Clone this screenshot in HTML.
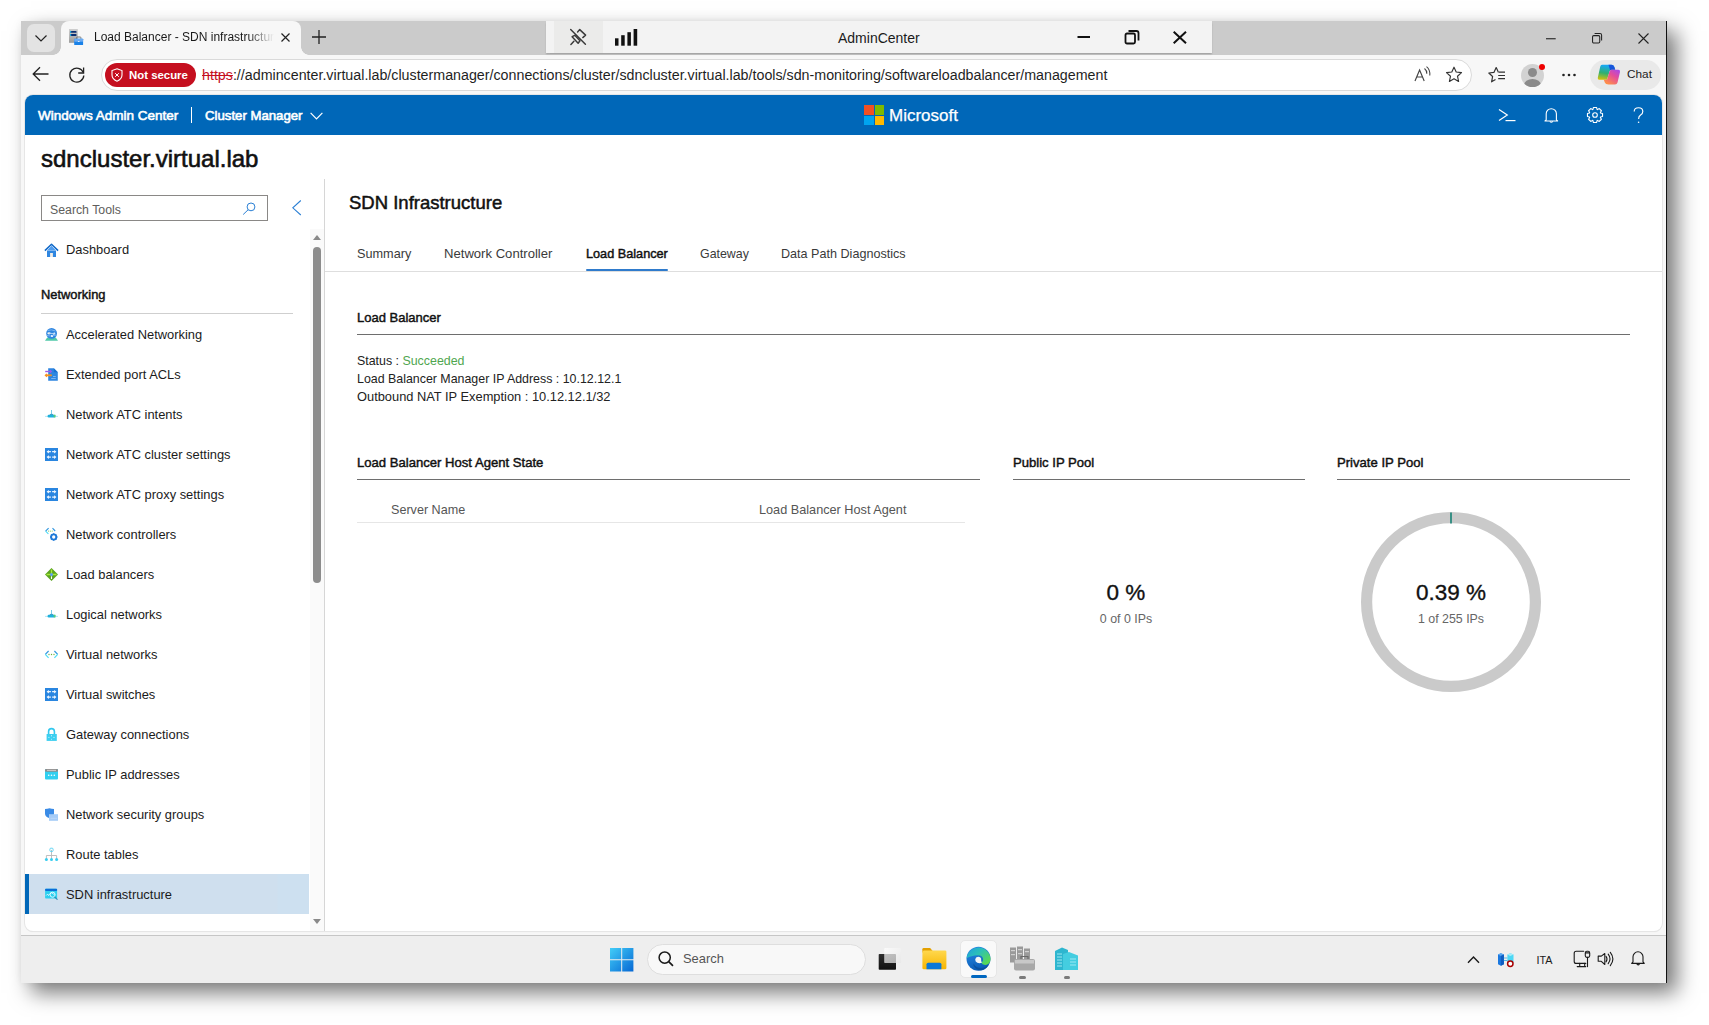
<!DOCTYPE html>
<html><head><meta charset="utf-8">
<style>
*{box-sizing:border-box;margin:0;padding:0}
html,body{width:1709px;height:1025px;overflow:hidden;background:#fff;font-family:"Liberation Sans",sans-serif;color:#1b1b1b}
.a{position:absolute}
.t{position:absolute;white-space:nowrap;line-height:1}
svg{position:absolute;overflow:visible}
#win{position:absolute;left:21px;top:21px;width:1646px;height:962px;background:#f7f7f7;box-shadow:10px 10px 20px rgba(0,0,0,.52), 0 0 8px rgba(0,0,0,.045);border-right:1px solid #111}
#tabstrip{position:absolute;left:21px;top:21px;width:1645px;height:34px;background:#cbcbcb}
#content{position:absolute;left:25px;top:95px;width:1637px;height:836px;background:#fff;border-radius:8px;overflow:hidden;box-shadow:0 0 0 1px #e6e6e6, 0 1px 1px rgba(0,0,0,.1)}
#taskbar{position:absolute;left:21px;top:935px;width:1645px;height:48px;background:#eeeeee;border-top:1px solid #c6c6c6}
.si{position:absolute;left:66px;font-size:12.9px;line-height:1;white-space:nowrap;color:#1b1b1b}
</style></head><body>
<div id="win"></div>
<div id="tabstrip"></div>
<!-- TABSTRIP -->
<div id="tabs">
  <div class="a" style="left:61px;top:21px;width:240px;height:34px;background:#f7f7f7;border-radius:8px 8px 0 0"></div>
  <div class="a" style="left:53px;top:47px;width:8px;height:8px;background:radial-gradient(circle at 0 0,#cbcbcb 7.5px,#f7f7f7 8px)"></div>
  <div class="a" style="left:301px;top:47px;width:8px;height:8px;background:radial-gradient(circle at 100% 0,#cbcbcb 7.5px,#f7f7f7 8px)"></div>
  <div class="a" style="left:27px;top:24px;width:28px;height:28px;background:#e3e3e3;border-radius:7px"></div>
  <svg style="left:35px;top:35px" width="12" height="7" viewBox="0 0 12 7"><path d="M0.5 0.5 L6 6 L11.5 0.5" fill="none" stroke="#222" stroke-width="1.2"/></svg>
  <svg style="left:68px;top:28px" width="17" height="18" viewBox="0 0 17 18">
    <defs><linearGradient id="fvg" x1="0" y1="0" x2="0" y2="1"><stop offset="0" stop-color="#cfcfcf"/><stop offset="1" stop-color="#9c9c9c"/></linearGradient></defs>
    <rect x="1" y="1" width="8.8" height="13.8" fill="url(#fvg)"/>
    <rect x="2" y="2.9" width="6.6" height="1.9" rx="0.9" fill="#0c2f72"/><rect x="2" y="2.9" width="1.2" height="1.9" fill="#2ab0e0"/>
    <rect x="2" y="6.1" width="6.6" height="1.9" rx="0.9" fill="#0c2f72"/><rect x="2" y="6.1" width="1.2" height="1.9" fill="#2ab0e0"/>
    <path d="M8.6 10.8 V9.6 Q8.6 9 9.3 9 H12.2 Q12.9 9 12.9 9.6 V10.8" fill="none" stroke="#6a6a6a" stroke-width="0.9"/>
    <rect x="6.2" y="10.7" width="8.9" height="6.3" rx="0.6" fill="#1a82e8"/>
    <rect x="6.2" y="10.7" width="8.9" height="3" rx="0.6" fill="#6aaaf2"/>
    <rect x="9.9" y="13.1" width="1.6" height="0.8" fill="#fff"/>
  </svg>
  <div class="t" style="left:94px;top:31px;font-size:12px;color:#1a1a1a;width:180px;overflow:hidden;-webkit-mask-image:linear-gradient(90deg,#000 85%,transparent 100%)">Load Balancer - SDN infrastructure</div>
  <svg style="left:281px;top:33px" width="9" height="9" viewBox="0 0 9 9"><path d="M0.5 0.5 L8.5 8.5 M8.5 0.5 L0.5 8.5" stroke="#222" stroke-width="1.2"/></svg>
  <svg style="left:312px;top:30px" width="14" height="14" viewBox="0 0 14 14"><path d="M7 0 V14 M0 7 H14" stroke="#222" stroke-width="1.3"/></svg>
  <!-- RDP bar -->
  <div class="a" style="left:546px;top:21px;width:666px;height:32px;background:#f3f3f3;box-shadow:0 1.5px 1.5px rgba(0,0,0,.18)"></div>
  <div class="a" style="left:554px;top:21px;width:49px;height:32px;background:#ebebea"></div>
  <svg style="left:569px;top:28px" width="18" height="18" viewBox="0 0 18 18"><g fill="none" stroke="#3a3a3a" stroke-width="1.45" stroke-linejoin="round" stroke-linecap="round"><path d="M1.7 1.6 L16.4 16.2"/><path d="M8.6 4 L10.75 1.6 L16.6 7.1 L13.8 9.6"/><path d="M3.1 8.7 L5.8 7.3 L11 12.7 L9.1 15.2 Z"/><path d="M4.9 13.2 L1.9 16.4"/></g></svg>
  <svg style="left:615px;top:29px" width="23" height="17" viewBox="0 0 23 17"><rect x="0" y="9.3" width="3.5" height="7.4" fill="#111"/><rect x="6.2" y="6.2" width="3.5" height="10.5" fill="#111"/><rect x="12.4" y="3.2" width="3.5" height="13.5" fill="#111"/><rect x="18.6" y="0" width="3.6" height="16.7" fill="#111"/></svg>
  <div class="t" style="left:838px;top:30.5px;font-size:14px;color:#1b1b1b">AdminCenter</div>
  <svg style="left:1077px;top:36px" width="14" height="3" viewBox="0 0 14 3"><rect x="0.5" y="0" width="12.5" height="2" fill="#111"/></svg>
  <svg style="left:1124px;top:29px" width="16" height="16" viewBox="0 0 16 16"><g fill="none" stroke="#111" stroke-width="1.8"><rect x="1.5" y="4.5" width="9.5" height="10" rx="1.5"/><path d="M4.5 2 H12.5 Q14.5 2 14.5 4 V11.5"/></g></svg>
  <svg style="left:1173px;top:31px" width="14" height="13" viewBox="0 0 14 13"><path d="M0.7 0.7 L13 12.3 M13 0.7 L0.7 12.3" stroke="#111" stroke-width="2"/></svg>
  <!-- window controls -->
  <svg style="left:1546px;top:37.6px" width="10" height="2" viewBox="0 0 10 2"><rect x="0" y="0.2" width="9.7" height="1.1" fill="#222"/></svg>
  <svg style="left:1592px;top:32.5px" width="11" height="11" viewBox="0 0 11 11"><g fill="none" stroke="#222" stroke-width="1.05"><rect x="0.55" y="2.6" width="7.2" height="7.4" rx="1.2"/><path d="M2.6 0.55 H8 Q9.6 0.55 9.6 2.2 V7.6"/></g></svg>
  <svg style="left:1637.5px;top:32.5px" width="11" height="11" viewBox="0 0 11 11"><path d="M0.5 0.5 L10.5 10.5 M10.5 0.5 L0.5 10.5" stroke="#222" stroke-width="1.1"/></svg>
</div>
<!-- TOOLBAR -->
<div id="toolbar">
  <svg style="left:32px;top:66px" width="17" height="16" viewBox="0 0 17 16"><path d="M16.5 8 H1.5 M8 1.2 L1.2 8 L8 14.8" fill="none" stroke="#222" stroke-width="1.3"/></svg>
  <svg style="left:68px;top:66px" width="18" height="18" viewBox="0 0 18 18"><path d="M15.3 6.5 A7 7 0 1 0 15.8 9.5" fill="none" stroke="#222" stroke-width="1.3"/><path d="M15.6 1.5 V7 H10.2" fill="none" stroke="#222" stroke-width="1.3"/></svg>
  <div class="a" style="left:101px;top:59px;width:1371px;height:32px;background:#fff;border:1px solid #dadada;border-radius:16px"></div>
  <div class="a" style="left:105px;top:63px;width:91px;height:24px;background:#c50f1f;border-radius:12px"></div>
  <svg style="left:111px;top:68px" width="12" height="14" viewBox="0 0 12 14"><path d="M6 0.8 L11 2.6 V7 Q11 11 6 13.2 Q1 11 1 7 V2.6 Z" fill="none" stroke="#fff" stroke-width="1.1"/><path d="M4.2 5.2 L7.8 8.8 M7.8 5.2 L4.2 8.8" stroke="#fff" stroke-width="1"/></svg>
  <div class="t" style="left:129px;top:70px;font-size:11.4px;font-weight:700;color:#fff">Not secure</div>
  <div class="t" style="left:202px;top:68px;font-size:14.25px;color:#1f1f1f"><span style="color:#c50f1f;text-decoration:line-through">https</span>://admincenter.virtual.lab/clustermanager/connections/cluster/sdncluster.virtual.lab/tools/sdn-monitoring/softwareloadbalancer/management</div>
  <svg style="left:1413px;top:65px" width="19" height="18" viewBox="0 0 19 18"><path d="M2 16 L6.6 5 L11.2 16 M3.7 12 H9.5" fill="none" stroke="#444" stroke-width="1.15"/><path d="M11.5 3.5 Q14 5.5 13.8 8.8 M13.5 1.6 Q17.3 4.5 16.8 10.5" fill="none" stroke="#444" stroke-width="1.05"/></svg>
  <svg style="left:1445px;top:66px" width="18" height="17" viewBox="0 0 18 17"><path d="M9 1.2 L11.2 6 L16.5 6.6 L12.5 10.2 L13.6 15.5 L9 12.8 L4.4 15.5 L5.5 10.2 L1.5 6.6 L6.8 6 Z" fill="none" stroke="#333" stroke-width="1.15" stroke-linejoin="round"/></svg>
  <svg style="left:1488px;top:66px" width="19" height="18" viewBox="0 0 19 18"><path d="M10.5 6.4 L8.2 1.5 L5.9 6.4 L0.8 7 L4.6 10.5 L3.6 15.8 L7.5 13.6" fill="none" stroke="#333" stroke-width="1.2" stroke-linejoin="round"/><path d="M11 6.2 H17 M10.2 9.5 H17 M10.2 12.7 H17" stroke="#333" stroke-width="1.2"/></svg>
  <div class="a" style="left:1521px;top:64px;width:23px;height:23px;border-radius:50%;background:#d2d2d2;overflow:hidden">
    <div class="a" style="left:7px;top:4px;width:9px;height:9px;border-radius:50%;background:#8a8a8a"></div>
    <div class="a" style="left:3px;top:15px;width:17px;height:12px;border-radius:50%;background:#8a8a8a"></div>
  </div>
  <div class="a" style="left:1539px;top:64px;width:6px;height:6px;border-radius:50%;background:#e00"></div>
  <svg style="left:1562px;top:73px" width="14" height="4" viewBox="0 0 14 4"><circle cx="1.5" cy="2" r="1.3" fill="#222"/><circle cx="7" cy="2" r="1.3" fill="#222"/><circle cx="12.5" cy="2" r="1.3" fill="#222"/></svg>
  <div class="a" style="left:1590px;top:60px;width:71px;height:30px;background:#e9e9e9;border-radius:15px"></div>
  <svg style="left:1597px;top:64px" width="24" height="22" viewBox="0 0 24 22">
    <defs>
      <linearGradient id="cpa" x1="0.2" y1="0" x2="0" y2="1"><stop offset="0" stop-color="#16a8f2"/><stop offset=".5" stop-color="#30b070"/><stop offset="1" stop-color="#e6c400"/></linearGradient>
      <linearGradient id="cpb" x1="1" y1="0" x2="0.3" y2="1"><stop offset="0" stop-color="#a248f2"/><stop offset=".45" stop-color="#e44c9a"/><stop offset="1" stop-color="#ff9048"/></linearGradient>
    </defs>
    <path d="M5 0.8 H14.5 Q16.6 0.8 17.4 3 L18.2 5.8 H14.6 Q13 5.8 12.5 7.5 L10 15.8 H2.2 Q0.4 15.8 0.8 13.8 L3.2 2.8 Q3.7 0.8 5 0.8Z" fill="url(#cpa)"/>
    <path d="M11.5 0.8 H14.5 Q16.6 0.8 17.4 3 L18.2 5.8 H14.6 Q13.6 5.8 13.2 6.5 Z" fill="#1846d8" opacity="0.85"/>
    <path d="M11.5 20.6 H18 Q20 20.6 20.5 18.6 L23 8 Q23.4 5.8 21.3 5.8 H14.6 Q13 5.8 12.5 7.5 L10 15.8 H6.8 L7.8 18.6 Q8.5 20.6 11.5 20.6Z" fill="url(#cpb)"/>
  </svg>
  <div class="t" style="left:1627px;top:69px;font-size:11.8px;color:#222">Chat</div>
</div>
<div id="content">
  <div class="a" style="left:0;top:0;width:1637px;height:40px;background:#0067b8"></div>
</div>
<div id="page">
  <!-- WAC header -->
  <div class="t" style="left:38px;top:108.9px;font-size:13.5px;color:#fff;-webkit-text-stroke:0.6px #fff">Windows Admin Center</div>
  <div class="a" style="left:191px;top:107px;width:1px;height:16px;background:#fff"></div>
  <div class="t" style="left:205px;top:109.1px;font-size:13.2px;color:#fff;-webkit-text-stroke:0.6px #fff">Cluster Manager</div>
  <svg style="left:310px;top:112px" width="13" height="8" viewBox="0 0 13 8"><path d="M0.6 0.8 L6.5 6.8 L12.4 0.8" fill="none" stroke="#fff" stroke-width="1.2"/></svg>
  <div class="a" style="left:864px;top:105px;width:9.5px;height:9.5px;background:#f25022"></div>
  <div class="a" style="left:874.5px;top:105px;width:9.5px;height:9.5px;background:#7fba00"></div>
  <div class="a" style="left:864px;top:115.5px;width:9.5px;height:9.5px;background:#00a4ef"></div>
  <div class="a" style="left:874.5px;top:115.5px;width:9.5px;height:9.5px;background:#ffb900"></div>
  <div class="t" style="left:889px;top:107.4px;font-size:17px;color:#fff;-webkit-text-stroke:0.25px #fff">Microsoft</div>
  <svg style="left:1498px;top:108px" width="18" height="14" viewBox="0 0 18 14"><path d="M1 1.5 L9.3 7 L1 12.5" fill="none" stroke="#fff" stroke-width="1.2"/><path d="M7.5 12.6 H17.5" stroke="#fff" stroke-width="1.2"/></svg>
  <svg style="left:1544px;top:107px" width="15" height="16" viewBox="0 0 15 16"><path d="M2.2 12.8 V6.8 A5.1 5.1 0 0 1 12.4 6.8 V12.8 L13.6 14 H1 Z" fill="none" stroke="#fff" stroke-width="1.1" stroke-linejoin="round"/><path d="M5.8 14.4 Q7.3 16 8.8 14.4" fill="none" stroke="#fff" stroke-width="1.1"/></svg>
  <svg style="left:1586px;top:106px" width="18" height="18" viewBox="0 0 18 18"><path d="M14.52 6.92 L16.55 7.47 L16.55 10.53 L14.52 11.08 L14.37 11.43 L15.42 13.25 L13.25 15.42 L11.43 14.37 L11.08 14.52 L10.53 16.55 L7.47 16.55 L6.92 14.52 L6.57 14.37 L4.75 15.42 L2.58 13.25 L3.63 11.43 L3.48 11.08 L1.45 10.53 L1.45 7.47 L3.48 6.92 L3.63 6.57 L2.58 4.75 L4.75 2.58 L6.57 3.63 L6.92 3.48 L7.47 1.45 L10.53 1.45 L11.08 3.48 L11.43 3.63 L13.25 2.58 L15.42 4.75 L14.37 6.57Z" fill="none" stroke="#fff" stroke-width="1.1" stroke-linejoin="round"/><circle cx="9" cy="9" r="2.3" fill="none" stroke="#fff" stroke-width="1.1"/></svg>
  <svg style="left:1633px;top:107px" width="12" height="17" viewBox="0 0 12 17"><path d="M1.2 4.6 Q1.2 0.7 5.5 0.7 Q9.8 0.7 9.8 4.4 Q9.8 6.6 7.6 8 Q5.6 9.3 5.6 12" fill="none" stroke="#fff" stroke-width="1.15"/><circle cx="5.6" cy="15.2" r="0.8" fill="#fff"/></svg>

  <!-- title -->
  <div class="t" style="left:41px;top:146.5px;font-size:24px;color:#111;-webkit-text-stroke:0.6px #111">sdncluster.virtual.lab</div>
  <!-- search -->
  <div class="a" style="left:41px;top:195px;width:227px;height:26px;border:1px solid #8a8886;background:#fff"></div>
  <div class="t" style="left:50px;top:203.6px;font-size:12.3px;color:#605e5c">Search Tools</div>
  <svg style="left:242px;top:202px" width="15" height="15" viewBox="0 0 15 15"><circle cx="9" cy="4.9" r="3.9" fill="none" stroke="#2a7fd4" stroke-width="1"/><path d="M6.1 7.8 L1.2 12.5" stroke="#2a7fd4" stroke-width="1"/></svg>
  <svg style="left:291px;top:199px" width="11" height="17" viewBox="0 0 11 17"><path d="M9.8 1.5 L1.8 8.8 L9.8 16" fill="none" stroke="#2a7fd4" stroke-width="1.05"/></svg>
  <div class="a" style="left:324px;top:179px;width:1px;height:752px;background:#d6d6d6"></div>

  <!-- sidebar -->
  <div id="side">
<svg width="0" height="0" style="position:absolute"><defs>
<symbol id="i-home" viewBox="0 0 24 24"><path d="M7 9.6 V16 H16 V9.6 Z" fill="#2f86e0"/><path d="M4.9 9.6 L11.5 3.2 L18.1 9.6" fill="none" stroke="#1068c8" stroke-width="1.5" stroke-linejoin="round"/><path d="M11.5 4.8 L7 9.6 H16 Z" fill="#4f9df0"/><rect x="10.1" y="12" width="2.8" height="4" fill="#f3eee6"/></symbol>
<symbol id="i-accel" viewBox="0 0 24 24"><path d="M7.2 13.5 H15.8 L18 16.8 H5 Z" fill="#50c8a8"/><circle cx="11.6" cy="9.4" r="5.4" fill="#2f86e0"/><path d="M7.5 6.5 Q11.5 5 15.5 7 M7 11.5 Q11 13 16 11" fill="none" stroke="#8cc0f5" stroke-width="0.8"/><ellipse cx="9" cy="9.3" rx="1.7" ry="1.1" fill="#f2f2f2"/><circle cx="14.3" cy="9.6" r="1" fill="#e8f2ff"/><circle cx="12" cy="12" r="1.1" fill="#fff"/><path d="M9 9.3 L14.3 9.6 M12 12 L14.3 9.6" stroke="#b8d8f8" stroke-width="0.9"/></symbol>
<symbol id="i-acl" viewBox="0 0 24 24"><path d="M8.2 4.2 H13.8 L17.8 8.2 V16.8 H8.2 Z" fill="#2f86e0"/><path d="M13.8 4.2 V8.2 H17.8 Z" fill="#1a6fd0"/><path d="M13 12.5 H15.8 M11.2 14.5 H15.8" stroke="#8ec0f5" stroke-width="0.8"/><path d="M5.2 7.5 H11.5" stroke="#9b5be8" stroke-width="1.4"/><path d="M10 6 L11.7 7.5 L10 9" fill="none" stroke="#9b5be8" stroke-width="1"/><path d="M5.8 11.3 H11.8" stroke="#f7931e" stroke-width="1.8"/><path d="M7 9.8 L5.3 11.3 L7 12.8" fill="none" stroke="#f7931e" stroke-width="1.1"/></symbol>
<symbol id="i-hub" viewBox="0 0 24 24"><path d="M11.5 6 V10.5" stroke="#68c8e8" stroke-width="0.9"/><ellipse cx="11.5" cy="10.7" rx="1.8" ry="0.9" fill="#4a9ac0"/><rect x="7.5" y="10.8" width="8" height="2.8" rx="1.4" fill="#1eb0dc"/><rect x="13.8" y="10.8" width="1.7" height="2.6" fill="#5ccf70"/><path d="M5 12.4 H7.5 M15.5 12.4 H18" stroke="#8fdcf0" stroke-width="0.7"/></symbol>
<symbol id="i-sq" viewBox="0 0 24 24"><rect x="5" y="4" width="13" height="13" fill="#2a86e0"/><g fill="#fff"><path d="M6.6 7.7 L8.9 5.9 V9.5 Z"/><path d="M16.4 7.7 L14.1 5.9 V9.5 Z"/><path d="M6.6 13.1 L8.9 11.3 V14.9 Z"/><path d="M16.4 13.1 L14.1 11.3 V14.9 Z"/></g><path d="M8.5 7.7 H10.9 M12.1 7.7 H14.5 M8.5 13.1 H10.9 M12.1 13.1 H14.5" stroke="#eef5fd" stroke-width="1.3"/></symbol>
<symbol id="i-nc" viewBox="0 0 24 24"><path d="M8.6 4.2 L5.6 7.1" stroke="#2f96e0" stroke-width="1.1"/><path d="M5.6 7.1 L8.4 9.8" stroke="#4cdcf5" stroke-width="1.1"/><path d="M12.5 4.2 L15.2 7" stroke="#2f96e0" stroke-width="1.1"/><g fill="#8cc860"><circle cx="8.6" cy="7.1" r="0.6"/><circle cx="10.4" cy="7.1" r="0.6"/><circle cx="12.2" cy="7.1" r="0.6"/></g><circle cx="13.7" cy="13" r="2.6" fill="none" stroke="#1f7ad8" stroke-width="1.9"/><g stroke="#1f7ad8" stroke-width="1.3"><path d="M13.7 9.3 V10.2 M13.7 15.8 V16.7 M10 13 H10.9 M16.5 13 H17.4 M11.1 10.4 L11.7 11 M15.7 15 L16.3 15.6 M16.3 10.4 L15.7 11 M11.7 15 L11.1 15.6"/></g></symbol>
<symbol id="i-lb" viewBox="0 0 24 24"><path d="M11.5 4 L18 10.5 L11.5 17 L5 10.5 Z" fill="#5aa321"/><path d="M11.5 5.5 V10.5 M6.5 10.5 H16.5" stroke="#a8e83a" stroke-width="1.3"/><circle cx="11.5" cy="10.5" r="1.5" fill="#5b9ef5"/><path d="M11.5 12.3 V15" stroke="#fff" stroke-width="1.1"/></symbol>
<symbol id="i-vn" viewBox="0 0 24 24"><path d="M8.6 7 L5.3 10.4" stroke="#2f96e0" stroke-width="1.2"/><path d="M5.3 10.4 L8.6 13.8" stroke="#4cdcf5" stroke-width="1.2"/><path d="M14.4 7 L17.7 10.4" stroke="#2f96e0" stroke-width="1.2"/><path d="M17.7 10.4 L14.4 13.8" stroke="#4cdcf5" stroke-width="1.2"/><g fill="#6cb43c"><circle cx="9" cy="10.5" r="0.65"/><circle cx="11.5" cy="10.5" r="0.7"/><circle cx="14" cy="10.5" r="0.65"/></g></symbol>
<symbol id="i-lock" viewBox="0 0 24 24"><path d="M8.6 10 V7.5 A2.9 2.9 0 0 1 14.4 7.5 V10" fill="none" stroke="#32c8ee" stroke-width="1.6"/><rect x="6.6" y="10" width="10.2" height="6.9" fill="#3ccff0"/><path d="M11.5 11 V12.4 M11.5 14.8 V15.8 M8.2 13.4 H9.6 M13.3 13.4 H14.7" stroke="#c8f2fc" stroke-width="0.8"/></symbol>
<symbol id="i-pip" viewBox="0 0 24 24"><rect x="5" y="5" width="13" height="10.6" rx="1" fill="#30cff0"/><rect x="5" y="5" width="13" height="2.8" rx="1" fill="#8d8d8d"/><rect x="7" y="5.8" width="9" height="1.2" fill="#c8c4c4"/><g fill="#fff"><circle cx="8.7" cy="11.2" r="0.8"/><circle cx="11.5" cy="11.2" r="0.8"/><circle cx="14.3" cy="11.2" r="0.8"/></g></symbol>
<symbol id="i-nsg" viewBox="0 0 24 24"><path d="M5 5 Q7.5 5 9.5 4.2 Q11.5 5 14 5 V9.5 Q14 12.5 9 14 Q5 12.5 5 9.5 Z" fill="#3a8be6"/><rect x="9" y="10.2" width="9" height="6.6" fill="#a6ccf7"/><path d="M10.5 14.3 H17" stroke="#c7e0fb" stroke-width="0.7"/></symbol>
<symbol id="i-rt" viewBox="0 0 24 24"><path d="M11.5 6 V15 M6.4 15.2 V11.5 H16.6 V15.2" fill="none" stroke="#b8b8b8" stroke-width="0.9"/><rect x="9.9" y="4.2" width="3.2" height="3.3" rx="1" fill="none" stroke="#58d0f0" stroke-width="0.9"/><g fill="#38cdef"><circle cx="6.4" cy="15.5" r="1.5"/><circle cx="11.5" cy="15.5" r="1.5"/><circle cx="16.6" cy="15.5" r="1.5"/></g></symbol>
<symbol id="i-sdn" viewBox="0 0 24 24"><rect x="5.1" y="4.8" width="12" height="9.8" rx="0.8" fill="#2ed0ef"/><rect x="5.1" y="4.8" width="12" height="2.2" rx="0.8" fill="#0a6fd8"/><path d="M6.2 11.5 L7.5 10.2 L8.5 11.5 L10 9.5 Q11.5 8 13 9.5 L14.5 11" fill="none" stroke="#fff" stroke-width="0.8"/><circle cx="12.6" cy="10.7" r="2.5" fill="none" stroke="#eefcff" stroke-width="0.9"/><path d="M14.5 12.8 L17.5 15.6" stroke="#2a8fb8" stroke-width="1.2"/></symbol>
</defs></svg>
<div class="a" style="left:25px;top:874px;width:284px;height:40px;background:linear-gradient(90deg,#cfdfee 0,#cfdfee 252px,#cde0f0 253px)"></div>
<div class="a" style="left:25px;top:874px;width:4px;height:40px;background:#0067b8"></div>
<svg style="left:40px;top:240.8px" width="24" height="24"><use href="#i-home"/></svg>
<div class="si" style="top:243.9px">Dashboard</div>
<div class="t" style="left:41px;top:289.2px;font-size:12.9px;color:#111;-webkit-text-stroke:0.45px #111">Networking</div>
<div class="a" style="left:41px;top:313px;width:252px;height:1px;background:#cfcfcf"></div>
<svg style="left:40px;top:324px" width="24" height="24"><use href="#i-accel"/></svg>
<div class="si" style="top:329.05px">Accelerated Networking</div>
<svg style="left:40px;top:364px" width="24" height="24"><use href="#i-acl"/></svg>
<div class="si" style="top:369.05px">Extended port ACLs</div>
<svg style="left:40px;top:404px" width="24" height="24"><use href="#i-hub"/></svg>
<div class="si" style="top:409.05px">Network ATC intents</div>
<svg style="left:40px;top:444px" width="24" height="24"><use href="#i-sq"/></svg>
<div class="si" style="top:449.05px">Network ATC cluster settings</div>
<svg style="left:40px;top:484px" width="24" height="24"><use href="#i-sq"/></svg>
<div class="si" style="top:489.05px">Network ATC proxy settings</div>
<svg style="left:40px;top:524px" width="24" height="24"><use href="#i-nc"/></svg>
<div class="si" style="top:529.05px">Network controllers</div>
<svg style="left:40px;top:564px" width="24" height="24"><use href="#i-lb"/></svg>
<div class="si" style="top:569.05px">Load balancers</div>
<svg style="left:40px;top:604px" width="24" height="24"><use href="#i-hub"/></svg>
<div class="si" style="top:609.05px">Logical networks</div>
<svg style="left:40px;top:644px" width="24" height="24"><use href="#i-vn"/></svg>
<div class="si" style="top:649.05px">Virtual networks</div>
<svg style="left:40px;top:684px" width="24" height="24"><use href="#i-sq"/></svg>
<div class="si" style="top:689.05px">Virtual switches</div>
<svg style="left:40px;top:724px" width="24" height="24"><use href="#i-lock"/></svg>
<div class="si" style="top:729.05px">Gateway connections</div>
<svg style="left:40px;top:764px" width="24" height="24"><use href="#i-pip"/></svg>
<div class="si" style="top:769.05px">Public IP addresses</div>
<svg style="left:40px;top:804px" width="24" height="24"><use href="#i-nsg"/></svg>
<div class="si" style="top:809.05px">Network security groups</div>
<svg style="left:40px;top:844px" width="24" height="24"><use href="#i-rt"/></svg>
<div class="si" style="top:849.05px">Route tables</div>
<svg style="left:40px;top:884px" width="24" height="24"><use href="#i-sdn"/></svg>
<div class="si" style="top:889.05px">SDN infrastructure</div>
<div class="a" style="left:310px;top:229px;width:14px;height:702px;background:#fafafa"></div>
<svg style="left:312px;top:234px" width="10" height="7" viewBox="0 0 10 7"><path d="M1 6 L5 1 L9 6 Z" fill="#8a8a8a"/></svg>
<div class="a" style="left:312.5px;top:247px;width:8.5px;height:336px;background:#8c8c8c;border-radius:4.5px"></div>
<svg style="left:312px;top:918px" width="10" height="7" viewBox="0 0 10 7"><path d="M1 1 L5 6 L9 1 Z" fill="#8a8a8a"/></svg>
</div>

  <!-- main -->
  <div class="t" style="left:349px;top:194.2px;font-size:18.5px;color:#111;-webkit-text-stroke:0.5px #111">SDN Infrastructure</div>
  <div class="t" style="left:357px;top:247.8px;font-size:12.7px;color:#3a3a3a">Summary</div>
  <div class="t" style="left:444px;top:247.4px;font-size:13.1px;color:#3a3a3a">Network Controller</div>
  <div class="t" style="left:586px;top:247.7px;font-size:12.7px;color:#111;-webkit-text-stroke:0.45px #111">Load Balancer</div>
  <div class="t" style="left:700px;top:247.8px;font-size:12.4px;color:#3a3a3a">Gateway</div>
  <div class="t" style="left:781px;top:247.8px;font-size:12.6px;color:#3a3a3a">Data Path Diagnostics</div>
  <div class="a" style="left:585.5px;top:268.8px;width:82px;height:2.2px;background:#2f7bcc;border-radius:1px"></div>
  <div class="a" style="left:325px;top:271px;width:1337px;height:1px;background:#dedede"></div>

  <div class="t" style="left:357px;top:311px;font-size:13px;color:#111;-webkit-text-stroke:0.45px #111">Load Balancer</div>
  <div class="a" style="left:357px;top:334px;width:1273px;height:1px;background:#6e6e6e"></div>
  <div class="t" style="left:357px;top:354.5px;font-size:12.4px;color:#222">Status : <span style="color:#4fa64f">Succeeded</span></div>
  <div class="t" style="left:357px;top:372.5px;font-size:12.4px;color:#222">Load Balancer Manager IP Address : 10.12.12.1</div>
  <div class="t" style="left:357px;top:390.8px;font-size:12.85px;color:#222">Outbound NAT IP Exemption : 10.12.12.1/32</div>

  <div class="t" style="left:357px;top:456px;font-size:13.1px;color:#111;-webkit-text-stroke:0.45px #111">Load Balancer Host Agent State</div>
  <div class="a" style="left:357px;top:479px;width:623px;height:1px;background:#6e6e6e"></div>
  <div class="t" style="left:1013px;top:456px;font-size:13.1px;color:#111;-webkit-text-stroke:0.45px #111">Public IP Pool</div>
  <div class="a" style="left:1013px;top:479px;width:292px;height:1px;background:#6e6e6e"></div>
  <div class="t" style="left:1337px;top:456px;font-size:13.1px;color:#111;-webkit-text-stroke:0.45px #111">Private IP Pool</div>
  <div class="a" style="left:1337px;top:479px;width:293px;height:1px;background:#6e6e6e"></div>

  <div class="t" style="left:391px;top:504.1px;font-size:12.6px;color:#555">Server Name</div>
  <div class="t" style="left:759px;top:504.1px;font-size:12.7px;color:#555">Load Balancer Host Agent</div>
  <div class="a" style="left:357px;top:522px;width:608px;height:1px;background:#e6e6e6"></div>

  <div class="t" style="left:1026px;width:200px;text-align:center;top:581.6px;font-size:22.5px;color:#111;-webkit-text-stroke:0.35px #111">0 %</div>
  <div class="t" style="left:1026px;width:200px;text-align:center;top:613.1px;font-size:12.4px;color:#666">0 of 0 IPs</div>
  <svg style="left:1361px;top:512px" width="180" height="180" viewBox="0 0 180 180"><circle cx="90" cy="90" r="84.4" fill="none" stroke="#cacaca" stroke-width="11.2"/><path d="M90 0.5 V11.5" stroke="#2a8a7e" stroke-width="1.8"/></svg>
  <div class="t" style="left:1351px;width:200px;text-align:center;top:581.6px;font-size:22.5px;color:#111;-webkit-text-stroke:0.35px #111">0.39 %</div>
  <div class="t" style="left:1351px;width:200px;text-align:center;top:613.1px;font-size:12.4px;color:#666">1 of 255 IPs</div>
</div>
<div id="taskbar"></div>
<div id="tb">
  <svg style="left:610px;top:947.7px" width="24" height="24" viewBox="0 0 24 24">
    <defs><linearGradient id="wg" gradientUnits="userSpaceOnUse" x1="0" y1="0" x2="23.4" y2="23.4"><stop offset="0" stop-color="#42cdf8"/><stop offset="1" stop-color="#0668d4"/></linearGradient></defs>
    <path d="M0 0 H11.2 V11.2 H0 Z M12.2 0 H23.4 V11.2 H12.2 Z M0 12.2 H11.2 V23.4 H0 Z M12.2 12.2 H23.4 V23.4 H12.2 Z" fill="url(#wg)"/>
  </svg>
  <div class="a" style="left:647px;top:943.5px;width:219px;height:31px;background:#f8f8f8;border:1px solid #dedede;border-radius:16px"></div>
  <svg style="left:657px;top:950px" width="18" height="18" viewBox="0 0 18 18"><circle cx="7.7" cy="7.6" r="5.6" fill="none" stroke="#1a1a1a" stroke-width="1.5"/><path d="M11.7 11.6 L15.5 15.4" stroke="#1a1a1a" stroke-width="1.7" stroke-linecap="round"/></svg>
  <div class="t" style="left:683px;top:953px;font-size:12.9px;color:#555">Search</div>
  <!-- task view -->
  <svg style="left:878px;top:947px" width="26" height="24" viewBox="0 0 26 24">
    <defs><linearGradient id="tvg" x1="0" y1="0" x2="1" y2="1"><stop offset="0" stop-color="#ffffff"/><stop offset="1" stop-color="#e6e6e6"/></linearGradient>
    <linearGradient id="tvd" x1="0" y1="0" x2="0" y2="1"><stop offset="0" stop-color="#2e2e2e"/><stop offset="1" stop-color="#111"/></linearGradient></defs>
    <rect x="0.7" y="7" width="17.3" height="15.8" rx="0.8" fill="url(#tvd)"/>
    <rect x="6.2" y="1" width="16.9" height="15.1" rx="0.8" fill="url(#tvg)" opacity="0.72"/>
  </svg>
  <!-- explorer -->
  <svg style="left:922px;top:948px" width="25" height="22" viewBox="0 0 25 22">
    <defs><linearGradient id="fdg" x1="0" y1="0" x2="0" y2="1"><stop offset="0" stop-color="#ffd84e"/><stop offset="1" stop-color="#f7b500"/></linearGradient></defs>
    <path d="M0.4 1.2 Q0.4 0 1.6 0 H8.2 L10.2 2.4 V4.5 H0.4 Z" fill="#e3a000"/>
    <path d="M0.4 4 Q0.4 2.4 2 2.4 H23 Q24.4 2.4 24.4 3.8 V20 Q24.4 21.3 23 21.3 H1.8 Q0.4 21.3 0.4 20 Z" fill="url(#fdg)"/>
    <path d="M4.5 21.3 V16.3 Q4.5 14.7 6.2 14.7 H17.8 Q19.4 14.7 19.4 16.3 V21.3 Z" fill="#0a78d8"/>
  </svg>
  <!-- edge -->
  <div class="a" style="left:960px;top:940px;width:37px;height:38px;background:#f9f9f9;border:1px solid #e6e6e6;border-radius:5px"></div>
  <svg style="left:966px;top:946px" width="25" height="26" viewBox="0 0 25 26">
    <defs>
      <linearGradient id="eg1" x1="0" y1="0" x2="1" y2="0.8"><stop offset="0" stop-color="#1e9ee0"/><stop offset=".45" stop-color="#2cc0b8"/><stop offset="1" stop-color="#5ddc4a"/></linearGradient>
      <linearGradient id="eg2" x1="0" y1="0" x2="0.3" y2="1"><stop offset="0" stop-color="#2a8ee8"/><stop offset="1" stop-color="#0b5db8"/></linearGradient>
    </defs>
    <circle cx="12.5" cy="12.8" r="12" fill="url(#eg2)"/>
    <path d="M0.6 12.2 A12 12 0 0 1 24.5 12.8 Q24.5 17.5 20.5 18.8 Q16.5 19.5 15 16.5 Q17.5 15.5 17 12.5 Q16 9.2 12 9.2 Q5 9.5 0.6 12.2Z" fill="url(#eg1)"/>
    <path d="M7.5 17.5 Q10 22 15 22 Q19.5 21.8 22.8 18.3 Q21.5 23 15.5 24.3 Q10 24.6 7.5 19.5Z" fill="#0a4e9a" opacity="0.8"/>
    <path d="M9.2 13.6 Q9.5 10.9 12.2 10.7 Q14.6 10.8 15.1 12.6 Q14.9 15 15.9 16.8 Q13.5 17.5 11.3 16.8 Q9.2 15.8 9.2 13.6Z" fill="#f3f6f8"/>
  </svg>
  <div class="a" style="left:971px;top:975px;width:16px;height:3px;background:#0067c0;border-radius:2px"></div>
  <!-- server manager -->
  <svg style="left:1009px;top:946px" width="27" height="26" viewBox="0 0 27 26">
    <g fill="#9a9a9a"><rect x="1" y="1.5" width="6" height="15"/><rect x="8" y="0.5" width="6" height="15"/><rect x="15" y="2.5" width="6" height="13"/></g>
    <g fill="#d0d0d0"><rect x="2" y="4" width="4" height="1.2"/><rect x="2" y="8" width="4" height="1.2"/><rect x="9" y="3" width="4" height="1.2"/><rect x="9" y="7" width="4" height="1.2"/><rect x="16" y="5" width="4" height="1.2"/></g>
    <rect x="5" y="13" width="21" height="11.5" rx="2" fill="#a8a8a8"/>
    <rect x="6" y="14" width="19" height="3.5" fill="#c8c8c8"/>
    <path d="M12 13 V10.5 H19 V13" fill="none" stroke="#6a6a6a" stroke-width="1.2"/>
  </svg>
  <div class="a" style="left:1019px;top:976px;width:7px;height:2.5px;background:#7a7a7a;border-radius:2px"></div>
  <!-- buildings -->
  <svg style="left:1054px;top:947px" width="25" height="24" viewBox="0 0 25 24">
    <path d="M1 4 L8 0.5 L14 3 V23 H1 Z" fill="#2eb6cf"/>
    <path d="M9 7 L15 5 L24 8.5 V23 H9 Z" fill="#44cde0"/>
    <g stroke="#a8ecf5" stroke-width="0.9"><path d="M3 7 H8 M3 10 H8 M3 13 H8 M3 16 H8 M3 19 H8"/><path d="M16 12 H22 M16 15 H22 M16 18 H22"/></g>
  </svg>
  <div class="a" style="left:1063.5px;top:976px;width:6px;height:2.5px;background:#7a7a7a;border-radius:2px"></div>
  <!-- tray -->
  <svg style="left:1467px;top:954.5px" width="13" height="9" viewBox="0 0 13 9"><path d="M1 7.8 L6.5 2 L12 7.8" fill="none" stroke="#1a1a1a" stroke-width="1.4"/></svg>
  <svg style="left:1497px;top:952px" width="19" height="16" viewBox="0 0 19 16">
    <path d="M1 2.6 L3.9 1.2 L6.9 2.6 V12.3 L3.9 13.8 L1 12.3 Z" fill="#1a78e0"/>
    <path d="M1 2.6 L3.9 1.2 L6.9 2.6 L3.9 4 Z" fill="#5aa8f0"/>
    <path d="M3.9 4 L6.9 2.6 V12.3 L3.9 13.8 Z" fill="#0e5cc0"/>
    <path d="M10.4 2.6 L13.3 1.2 L16.5 2.6 V10.8 L13.3 12.3 L10.4 10.8 Z" fill="#4cd8f5"/>
    <path d="M10.4 2.6 L13.3 1.2 L16.5 2.6 L13.3 4 Z" fill="#a8ecfa"/>
    <path d="M6.9 6 H10.4 M6.9 8.5 H10.4" stroke="#58b8e8" stroke-width="1"/>
    <circle cx="13.3" cy="11.7" r="2.7" fill="#fff" stroke="#a80000" stroke-width="1.5"/>
  </svg>
  <div class="t" style="left:1536.5px;top:955.2px;font-size:10.8px;color:#1a1a1a">ITA</div>
  <svg style="left:1573px;top:950px" width="18" height="18" viewBox="0 0 18 18"><g fill="none" stroke="#1a1a1a" stroke-width="1.1" stroke-linecap="round"><path d="M10.7 1.3 H3.2 Q1.2 1.3 1.2 3.3 V11.4 Q1.2 13.4 3.2 13.4 H12.8"/><path d="M6.7 13.4 V16.5 M11.7 13.4 V16.5 M4.2 16.6 H12.8"/><rect x="12.3" y="1.3" width="4.4" height="6.1" rx="1.6"/><path d="M12.5 2.9 H16.5"/><path d="M14.5 7.4 V16.6"/></g></svg>
  <svg style="left:1597px;top:952px" width="19" height="15" viewBox="0 0 19 15"><g fill="none" stroke="#1a1a1a" stroke-width="1.1" stroke-linecap="round" stroke-linejoin="round"><path d="M1.2 4.1 H4.3 L7.8 1.5 V12.5 L4.3 9.3 H1.2 Z"/><path d="M9 4.3 Q11 7.1 9 9.9"/><path d="M11.2 2.2 Q14.8 7 11.2 11.7"/><path d="M13.3 0.4 Q18.5 7 13.3 13.7"/></g></svg>
  <svg style="left:1631px;top:951px" width="14" height="16" viewBox="0 0 14 16"><g fill="none" stroke="#1a1a1a" stroke-width="1.1" stroke-linejoin="round"><path d="M2 10.9 V5.8 A5 5 0 0 1 12 5.8 V10.9 L13.3 12.4 H0.7 Z"/><path d="M5.6 12.6 Q7 15.2 8.6 12.6"/></g></svg>
</div>
</body></html>
